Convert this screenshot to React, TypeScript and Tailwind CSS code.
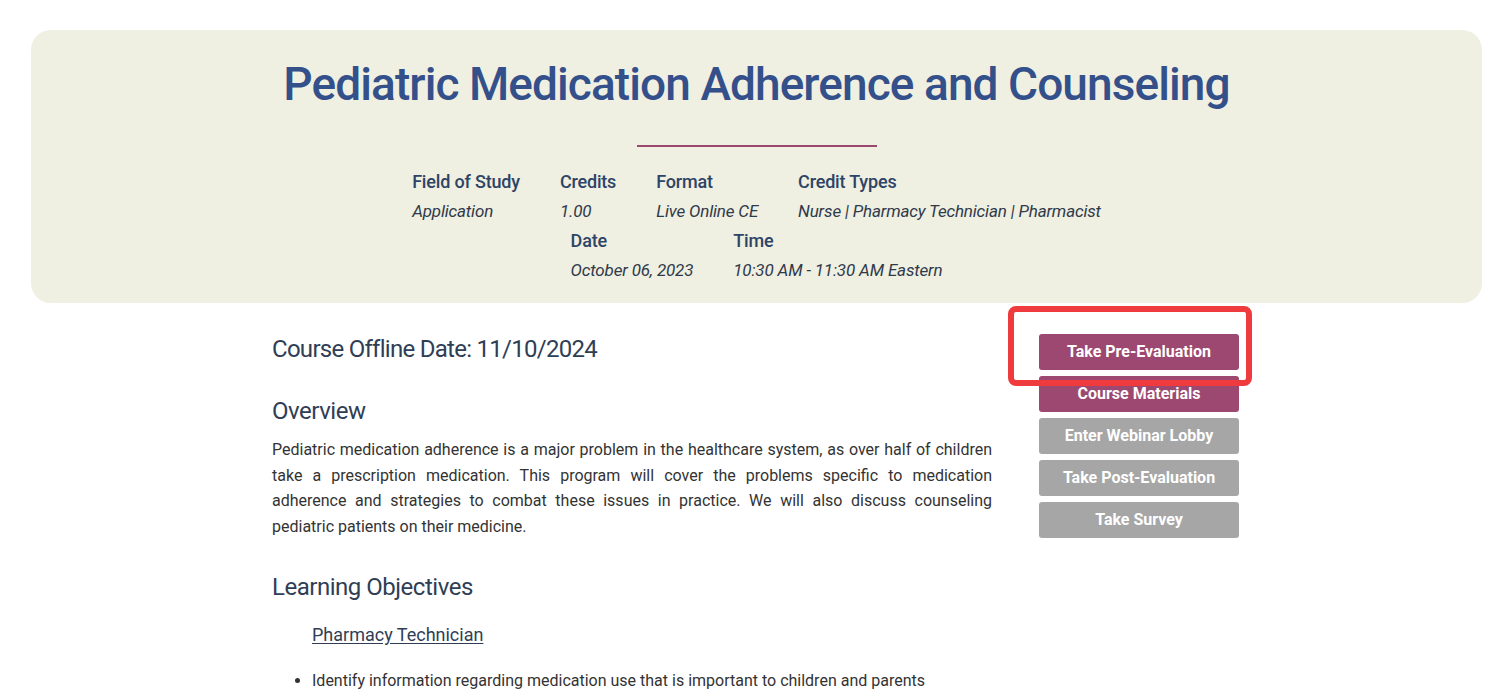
import React from "react";

const meta = [
  { label: "Field of Study", value: "Application" },
  { label: "Credits", value: "1.00" },
  { label: "Format", value: "Live Online CE" },
  { label: "Credit Types", value: "Nurse | Pharmacy Technician | Pharmacist" },
  { label: "Date", value: "October 06, 2023" },
  { label: "Time", value: "10:30 AM - 11:30 AM Eastern" },
];

const buttons = [
  { label: "Take Pre-Evaluation", active: true },
  { label: "Course Materials", active: true },
  { label: "Enter Webinar Lobby", active: false },
  { label: "Take Post-Evaluation", active: false },
  { label: "Take Survey", active: false },
];

export default function App() {
  return (
    <div className="min-h-[694px] bg-white pl-[31px] pr-[23px] pt-[30px] font-['Roboto',sans-serif]">
      <header className="rounded-[20px] bg-[#efefe2] pt-[26px] pb-[18px]">
        <h1 className="text-center text-[46px] leading-[56px] font-medium text-[#34508a] tracking-[-0.02em]">
          Pediatric Medication Adherence and Counseling
        </h1>
        <div className="mx-auto mt-[33px] h-[2px] w-[240px] bg-[#9c4770]" />
        <dl className="mx-auto mt-[20px] flex max-w-[800px] flex-wrap justify-center gap-x-[40px]">
          {meta.map((m) => (
            <div key={m.label} className="flex flex-col">
              <dt className="text-[18px] leading-[30px] font-medium text-[#2d4466] tracking-[-0.01em]">{m.label}</dt>
              <dd className="text-[17px] leading-[29px] italic text-[#2f3a4a] tracking-[-0.01em]">{m.value}</dd>
            </div>
          ))}
        </dl>
      </header>

      <main className="mx-auto mt-[30px] flex w-[969px] gap-[47px] pr-[2px]">
        <section className="w-[720px] text-[#2f3e55]">
          <h2 className="text-[24px] leading-[32px] tracking-[-0.03em]">Course Offline Date: 11/10/2024</h2>
          <h3 className="mt-[30px] text-[24px] leading-[32px] tracking-[-0.02em]">Overview</h3>
          <p className="mt-[10px] text-justify text-[16px] leading-[25.5px] text-[#333333]">
            Pediatric medication adherence is a major problem in the healthcare system, as over half of children
            take a prescription medication. This program will cover the problems specific to medication adherence
            and strategies to combat these issues in practice. We will also discuss counseling pediatric patients on
            their medicine.
          </p>
          <h3 className="mt-[32px] text-[24px] leading-[32px] tracking-[-0.02em]">Learning Objectives</h3>
          <div className="mt-[18px] pl-[40px]">
            <a href="#" className="text-[18px] leading-[28px] text-[#2f3e55] underline underline-offset-2">
              Pharmacy Technician
            </a>
          </div>
          <ul className="mt-[20px] list-disc pl-[40px] text-[16px] leading-[24px] text-[#333333]">
            <li>Identify information regarding medication use that is important to children and parents</li>
          </ul>
        </section>

        <aside className="relative mt-[-1px] flex w-[200px] flex-col gap-[6px] pt-[2px]">
          {buttons.map((b) => (
            <button
              key={b.label}
              type="button"
              className={`h-[36px] shrink-0 rounded-[3px] text-[16px] font-bold text-white ${
                b.active ? "bg-[#9c4870]" : "bg-[#a6a6a6]"
              }`}
            >
              {b.label}
            </button>
          ))}
          <div className="pointer-events-none absolute left-[-31px] top-[-26px] h-[80px] w-[244px] rounded-[8px] border-[6px] border-[#ef3b3e]" />
        </aside>
      </main>
    </div>
  );
}
